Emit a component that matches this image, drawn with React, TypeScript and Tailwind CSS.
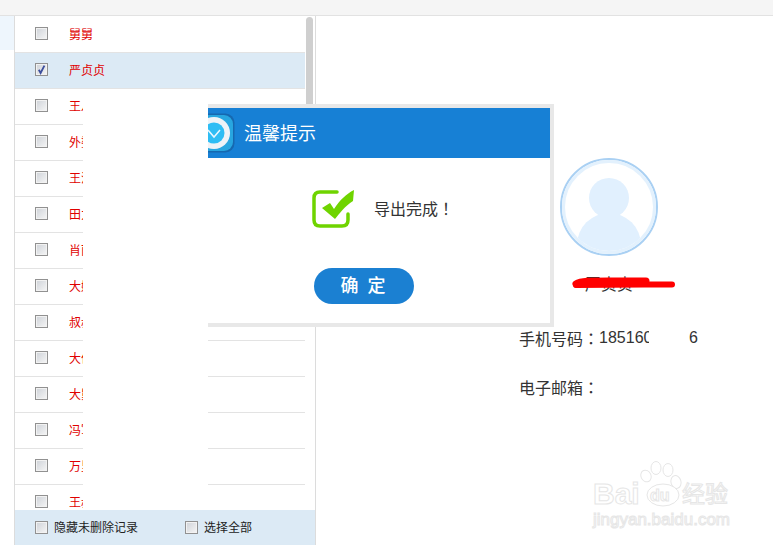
import React from "react";

const NAMES = ["舅舅", "严贞贞", "王八", "外婆", "王江", "田力", "肖丽", "大姨", "叔叔", "大伯", "大舅", "冯军", "万里", "王叔"];

// punctuation sits centred in the cell in the picture, which is the TC form
const TC = "[font-family:'Noto_Sans_CJK_TC',sans-serif]";

function Box({ checked = false }: { checked?: boolean }) {
  return (
    <span className="relative block w-[13px] h-[13px] shrink-0 border border-[#919191] bg-gradient-to-br from-[#ced2d8] to-[#f6f6f6] outline outline-1 -outline-offset-2 outline-[#f2f2f2]">
      {checked && (
        <svg viewBox="0 0 13 13" className="absolute -left-px -top-px w-[13px] h-[13px]">
          <path d="M3.8 6.8 L5.6 10 L9.4 2.6" fill="none" stroke="#3d4f9c" strokeWidth="1.8" />
        </svg>
      )}
    </span>
  );
}

function Row({ name, active }: { name: string; active: boolean }) {
  return (
    <div className={`flex items-center h-9 shrink-0 pl-5 pb-[2px] border-b border-[#e3e3e3] ${active ? "bg-[#dceaf5]" : ""}`}>
      <Box checked={active} />
      <span className="ml-[21px] mt-[3px] text-[12px] text-[#e00000]">{name}</span>
    </div>
  );
}

function Sidebar() {
  return (
    <div className="w-[300px] flex flex-col border-l border-r border-[#dcdcdc] ml-[14px] box-content">
      <div className="flex h-[494px] overflow-hidden">
        <div className="w-[290px] pt-px flex flex-col">
          {NAMES.map((n, i) => (
            <Row key={i} name={n} active={i === 1} />
          ))}
        </div>
        <div className="ml-px pt-px">
          <div className="w-[7px] h-[190px] rounded-full bg-[#cfcfcf]" />
        </div>
      </div>
      <div className="h-[35px] bg-[#dceaf5] flex items-center pl-5 text-[12px] text-[#222]">
        <Box />
        <span className="ml-[6px] w-[131px]">隐藏未删除记录</span>
        <Box />
        <span className="ml-[6px]">选择全部</span>
      </div>
    </div>
  );
}

function Profile() {
  return (
    <div className="pl-[203px] pt-[142px] text-[16px] text-[#333]">
      <div className="ml-[41px] w-[98px] h-[98px] rounded-full border-2 border-[#a9d0f3] bg-white">
        <div className="w-full h-full rounded-full border-[3px] border-[#e3f1fd] overflow-hidden">
          <svg viewBox="0 0 88 88" className="w-full h-full">
            <circle cx="44" cy="35" r="20" fill="#e1f0fe" />
            <circle cx="44" cy="82" r="32" fill="#e1f0fe" />
          </svg>
        </div>
      </div>
      <div className="relative ml-[41px] w-[98px] mt-[19px] h-5 text-center text-[16px] leading-5">
        严贞贞
        <svg viewBox="0 0 106 16" className="absolute left-[10px] top-[0px] w-[106px] h-4">
          <path d="M6 9 C12 5 20 6 76 6" fill="none" stroke="#ff0000" strokeWidth="7" strokeLinecap="round" />
          <path d="M6 10 L74 9.5 L102 9.5" fill="none" stroke="#ff0000" strokeWidth="6" strokeLinecap="round" strokeLinejoin="round" />
        </svg>
      </div>
      <div className="mt-[31px] h-6 leading-6 flex">
        <span>手机号码<span className={TC}>：</span></span>
        <span className="w-[50px] overflow-hidden">185160</span>
        <span className="ml-[40px]">6</span>
      </div>
      <div className="mt-[25px] h-6 leading-6">电子邮箱<span className={TC}>：</span></div>
    </div>
  );
}

function Dialog() {
  return (
    <div className="absolute left-[208px] top-[104px] w-[346px] h-[223px] bg-[#e8e8e8] pt-1 pr-1 pb-1">
      <div className="h-full bg-white overflow-hidden">
        <div className="h-[50px] bg-[#1780d5] flex items-center text-white text-[18px]">
          <svg viewBox="0 0 41 40" className="w-[41px] h-10 -ml-[14px] shrink-0">
            <rect x="0.5" y="0.5" width="40" height="39" rx="9" fill="#1668b0" />
            <rect x="1.5" y="2" width="37.5" height="36" rx="9" fill="#28a6e0" />
            <circle cx="20" cy="20" r="16" fill="#eef3f7" />
            <circle cx="20" cy="20" r="10.5" fill="#2ebdf4" />
            <path d="M14 17 L20 24 L26 17" fill="none" stroke="#e8f7ff" strokeWidth="1.5" />
          </svg>
          <span className="ml-[9px] mt-[2px]">温馨提示</span>
        </div>
        <div className="flex items-center pl-[104px] pt-[32px]">
          <svg viewBox="0 0 38 38" className="w-[38px] h-[38px] shrink-0 overflow-visible">
            <path d="M25 2 H8 Q2 2 2 8 V30 Q2 36 8 36 H30 Q36 36 36 30 V24" fill="none" stroke="#6fd400" strokeWidth="3.5" strokeLinecap="round" />
            <path d="M10 18 L18 13 L22 19 C28 10 34 4 42 0 L41 11 C33 16 27 24 23 29 Z" fill="#6fd400" />
          </svg>
          <span className="ml-6 text-[16px] text-[#333]">导出完成<span className={TC}>！</span></span>
        </div>
        <div className="mt-10 ml-[106px] w-[100px] h-9 rounded-full bg-[#1b80d2] flex items-center justify-center text-white text-[18px] font-medium tracking-[2px]">
          确 定
        </div>
      </div>
    </div>
  );
}

function Watermark() {
  return (
    <div className="absolute left-[592px] top-[461px] w-[170px] h-[70px] text-white [-webkit-text-stroke:1px_#e6e6e6]">
      <svg viewBox="0 0 44 46" className="absolute left-[48px] top-0 w-[44px] h-[46px]">
        <g fill="#fff" stroke="#e6e6e6" strokeWidth="1">
          <ellipse cx="6" cy="15" rx="5" ry="6" transform="rotate(-25 6 15)" />
          <ellipse cx="16" cy="7" rx="5" ry="6.5" />
          <ellipse cx="28" cy="9" rx="5" ry="6.5" />
          <ellipse cx="36" cy="21" rx="5" ry="6.5" transform="rotate(-15 36 21)" />
          <ellipse cx="23" cy="34" rx="16" ry="11" />
        </g>
      </svg>
      <span className="absolute left-[1px] top-[17px] text-[30px] leading-[32px] font-bold [font-family:'Liberation_Sans',sans-serif]">Bai</span>
      <span className="absolute left-[58px] top-[27px] text-[16px] leading-4 font-bold [font-family:'Liberation_Sans',sans-serif]">du</span>
      <span className="absolute left-[90px] top-[19px] text-[23px] leading-7">经验</span>
      <span className="absolute left-[1px] top-[49px] text-[17px] leading-5 [font-family:'Liberation_Sans',sans-serif]">jingyan.baidu.com</span>
    </div>
  );
}

export default function App() {
  return (
    <div className="relative w-[773px] h-[545px] overflow-hidden bg-white [font-family:'Liberation_Sans','Noto_Sans_CJK_SC',sans-serif]">
      <div className="h-4 bg-[#f5f5f5] border-b border-[#e2e2e2]" />
      <div className="flex h-[529px]">
        <div className="w-0 relative">
          <div className="absolute left-0 top-0 w-[14px] h-[34px] bg-[#eef6fd]" />
        </div>
        <Sidebar />
        <Profile />
      </div>
      {/* blanked-out part of the names behind the dialog */}
      <div className="absolute left-[83px] top-[90px] w-[125px] h-[420px] bg-white" />
      <Dialog />
      <Watermark />
    </div>
  );
}
